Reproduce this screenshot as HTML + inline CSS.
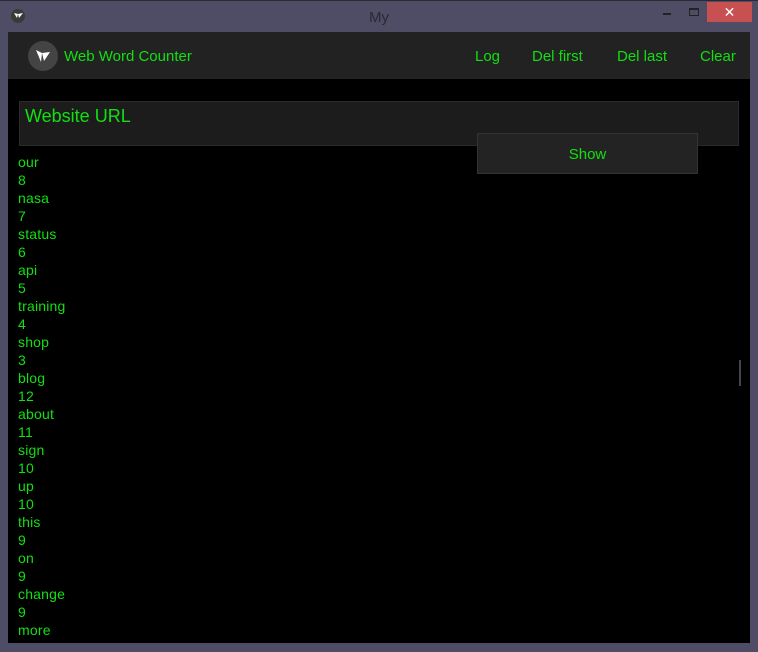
<!DOCTYPE html>
<html><head><style>
*{margin:0;padding:0;box-sizing:border-box}
body{width:758px;height:652px;background:#4f4c66;position:relative;overflow:hidden;font-family:"Liberation Sans",sans-serif;color:#11e011}
.top{position:absolute;left:0;top:0;width:758px;height:1px;background:#2a2a33}
.title{position:absolute;left:0;top:9px;width:758px;text-align:center;color:#2a2a33;font-size:15px}
.close{position:absolute;left:707px;top:2px;width:45px;height:20px;background:#c75050;color:#fff;text-align:center;font-size:14px;line-height:20px}
.min{position:absolute;left:663px;top:13px;width:8px;height:2px;background:#222}
.max{position:absolute;left:689px;top:8px;width:10px;height:8px;border:1px solid #222;border-top-width:2px}
.ico{position:absolute;left:11px;top:9px;width:14px;height:14px;border-radius:50%;background:#3a3a3a}
.content{position:absolute;left:8px;top:32px;width:742px;height:611px;background:#000;overflow:hidden}
.nav{position:absolute;left:0;top:0;width:742px;height:47px;background:#222}
.logo{position:absolute;left:20px;top:9px;width:30px;height:30px;border-radius:50%;background:#444}
.nav span{position:absolute;top:16px;font-size:15px}
.inp{position:absolute;left:11px;top:69px;width:720px;height:45px;background:#1c1c1c;border:1px solid #2a2a2a;font-size:18px;padding:4px 5px}
.btn{position:absolute;left:469px;top:101px;width:221px;height:41px;background:#232323;border:1px solid #333;text-align:center;font-size:15px;line-height:42px}
.list{position:absolute;left:10px;top:121px;font-size:14px;line-height:18px;letter-spacing:0.2px}
.sb{position:absolute;left:731px;top:328px;width:2px;height:26px;background:#444}
</style></head><body>
<div class="top"></div>
<div class="ico"><svg width="14" height="14" viewBox="0 0 14 14"><path d="M3 4l3 5 1-4zM7 5l1 4 4-5z" fill="#fff"/></svg></div>
<div class="title">My</div>
<div class="min"></div><div class="max"></div>
<div class="close">✕</div>
<div class="content">
<div class="nav">
<div class="logo"><svg width="30" height="30" viewBox="0 0 30 30"><path d="M8 9l5 12 1-9zM14 12l2 8 6-9z" fill="#fff"/></svg></div>
<span style="left:56px">Web Word Counter</span>
<span style="left:467px">Log</span>
<span style="left:524px">Del first</span>
<span style="left:609px">Del last</span>
<span style="left:692px">Clear</span>
</div>
<div class="inp">Website URL</div>
<div class="btn">Show</div>
<div class="list">our<br>8<br>nasa<br>7<br>status<br>6<br>api<br>5<br>training<br>4<br>shop<br>3<br>blog<br>12<br>about<br>11<br>sign<br>10<br>up<br>10<br>this<br>9<br>on<br>9<br>change<br>9<br>more<br>8</div>
<div class="sb"></div>
</div>
</body></html>
